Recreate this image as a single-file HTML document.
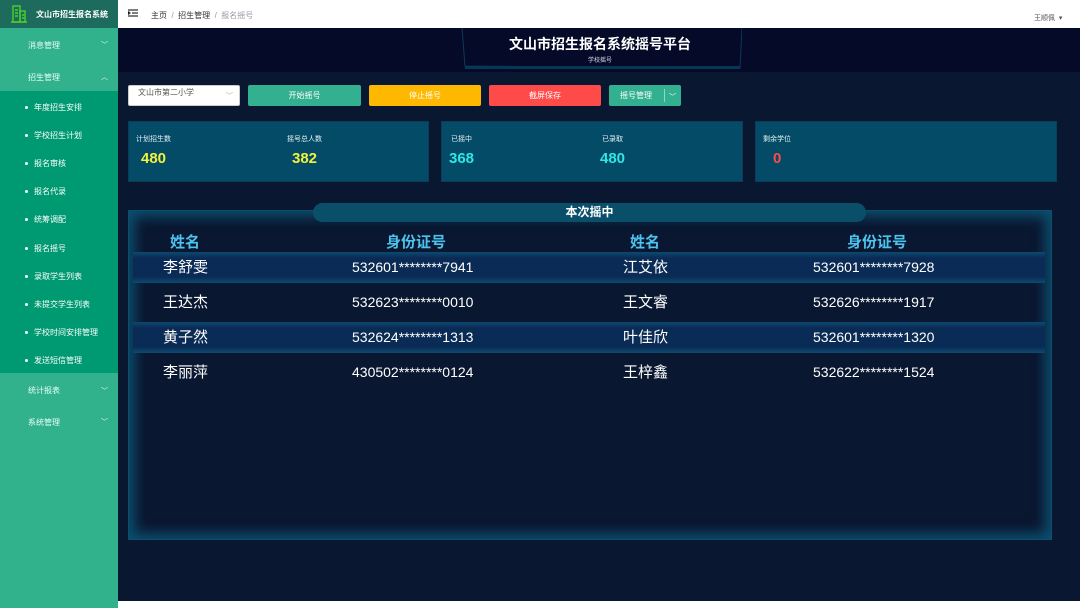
<!DOCTYPE html>
<html><head><meta charset="utf-8"><style>
*{margin:0;padding:0;box-sizing:border-box}
body{width:1080px;height:608px;overflow:hidden;font-family:"Liberation Sans","Noto Sans CJK SC",sans-serif;background:#fff;position:relative}
.abs{position:absolute}
.side{left:0;top:0;width:118px;height:608px;background:#32b18d}
.logo{left:0;top:0;width:118px;height:28px;background:#1d6b5d;color:#fff;font-size:8px;font-weight:bold}
.sub{left:0;top:91px;width:118px;height:282px;background:#009a72}
.mi{color:#e8fff7;font-size:8px;position:absolute;left:28px}
.si{color:#fff;font-size:8px;position:absolute;left:34px}
.si:before{content:"";position:absolute;left:-9px;top:4px;width:3px;height:3px;border-radius:50%;background:#fff}
.chev{position:absolute;left:101px;color:#dff;font-size:7px}
.top{left:118px;top:0;width:962px;height:28px;background:#fff;font-size:8px;color:#333}
.main{left:118px;top:28px;width:962px;height:573px;background:#0a1730}
.band{left:118px;top:28px;width:962px;height:44px;background:#050a28}
.btn{position:absolute;top:85px;height:21px;border-radius:2px;color:#fff;font-size:8px;text-align:center;line-height:21px}
.card{position:absolute;top:121px;height:61px;background:#044b67;border:1px solid #0a3d58}
.lb{position:absolute;top:12px;color:#e6f2f6;font-size:7px}
.num{position:absolute;top:28px;font-size:15px;font-weight:bold}
.row{position:absolute;left:133px;width:912px;color:#fff;font-size:15px;line-height:31px}
.row span{position:absolute;top:0}
.row span.id{font-size:14px}
.hl{background:linear-gradient(#0d4a70,#0a2b55 20%,#0a2b55 80%,#0d4a70)}
</style></head><body>
<div class="abs side"></div>
<div class="abs logo">
<svg class="abs" style="left:11px;top:5px" width="16" height="18" viewBox="0 0 16 18" fill="none" stroke="#4ccf2a" stroke-width="1.4"><rect x="2" y="1" width="7" height="16"/><rect x="9" y="6" width="5" height="11"/><path d="M4 5h3M4 8h3M4 11h3M11 10h2M11 13h2M0 17h16"/></svg>
<span class="abs" style="left:36px;top:9px">文山市招生报名系统</span></div>
<div class="abs sub"></div>
<div class="mi" style="top:40px">消息管理</div><div class="chev" style="top:40px">﹀</div>
<div class="mi" style="top:72px">招生管理</div><div class="chev" style="top:72px">︿</div>
<div class="si" style="top:102px">年度招生安排</div>
<div class="si" style="top:130px">学校招生计划</div>
<div class="si" style="top:158px">报名审核</div>
<div class="si" style="top:186px">报名代录</div>
<div class="si" style="top:214px">统筹调配</div>
<div class="si" style="top:243px">报名摇号</div>
<div class="si" style="top:271px">录取学生列表</div>
<div class="si" style="top:299px">未提交学生列表</div>
<div class="si" style="top:327px">学校时间安排管理</div>
<div class="si" style="top:355px">发送短信管理</div>
<div class="mi" style="top:385px">统计报表</div><div class="chev" style="top:386px">﹀</div>
<div class="mi" style="top:417px">系统管理</div><div class="chev" style="top:417px">﹀</div>
<div class="abs top">
<svg class="abs" style="left:10px;top:9px" width="10" height="8" viewBox="0 0 10 8" stroke="#333" stroke-width="1.2"><path d="M0 1h10M4 4h6M0 7h10M0 2.5l2 1.5-2 1.5"/></svg>
<span class="abs" style="left:33px;top:10px">主页 <span style="color:#999">&nbsp;/&nbsp;</span> 招生管理 <span style="color:#999">&nbsp;/&nbsp;</span> <span style="color:#99a">报名摇号</span></span>
<span class="abs" style="left:916px;top:13px;font-size:7px;color:#555">王顺佩 &nbsp;▾</span></div>
<div class="abs main"></div>
<div class="abs band"></div>
<svg class="abs" style="left:458px;top:28px" width="284" height="44"><path d="M4 0 L7 38 L282 40 L284 0" fill="none" stroke="#0d3a58" stroke-width="1"/><rect x="7" y="38" width="275" height="3" fill="#083656"/></svg>
<div class="abs" style="left:458px;top:34px;width:284px;text-align:center;color:#fff;font-size:14px;font-weight:bold">文山市招生报名系统摇号平台</div>
<div class="abs" style="left:458px;top:55px;width:284px;text-align:center;color:#dde;font-size:6px">学校摇号</div>
<div class="btn" style="left:128px;width:112px;background:#fff;color:#555;text-align:left;padding-left:9px;line-height:13px;border:1px solid #ccc">文山市第二小学<span style="position:absolute;right:6px;top:4px;color:#aaa;font-size:7px">﹀</span></div>
<div class="btn" style="left:248px;width:113px;background:#33b08f">开始摇号</div>
<div class="btn" style="left:369px;width:112px;background:#ffb800">停止摇号</div>
<div class="btn" style="left:489px;width:112px;background:#ff4a4a">截屏保存</div>
<div class="btn" style="left:609px;width:72px;background:#33b08f;text-align:left;padding-left:11px">摇号管理<span style="position:absolute;left:55px;top:4px;height:13px;border-left:1px solid #8fd9c3"></span><span style="position:absolute;left:60px;top:2px;font-size:7px">﹀</span></div>
<div class="card" style="left:128px;width:301px"><span class="lb" style="left:7px">计划招生数</span><span class="num" style="left:12px;color:#f2f23a">480</span><span class="lb" style="left:158px">摇号总人数</span><span class="num" style="left:163px;color:#f2f23a">382</span></div>
<div class="card" style="left:441px;width:302px"><span class="lb" style="left:9px">已摇中</span><span class="num" style="left:7px;color:#2ee6e6">368</span><span class="lb" style="left:160px">已录取</span><span class="num" style="left:158px;color:#2ee6e6">480</span></div>
<div class="card" style="left:755px;width:302px"><span class="lb" style="left:7px">剩余学位</span><span class="num" style="left:17px;color:#ff4a4a">0</span></div>
<div class="abs" style="left:128px;top:210px;width:924px;height:330px;background:#0a1730;box-shadow:inset 0 0 12px 6px #0b4e6e;border:1px solid #0b4e6e"></div>
<div class="abs" style="left:313px;top:203px;width:553px;height:19px;border-radius:10px;background:#0a4f6a;color:#fff;font-size:12px;font-weight:bold;text-align:center;line-height:19px">本次摇中</div>
<div class="row" style="top:227px;height:28px;color:#4cc3ee;font-weight:bold"><span style="left:37px">姓名</span><span style="left:253px">身份证号</span><span style="left:497px">姓名</span><span style="left:714px">身份证号</span></div>
<div class="row hl" style="top:252px;height:31px"><span style="left:30px">李舒雯</span><span class="id" style="left:219px">532601********7941</span><span style="left:490px">江艾依</span><span class="id" style="left:680px">532601********7928</span></div>
<div class="row" style="top:287px;height:31px"><span style="left:30px">王达杰</span><span class="id" style="left:219px">532623********0010</span><span style="left:490px">王文睿</span><span class="id" style="left:680px">532626********1917</span></div>
<div class="row hl" style="top:322px;height:31px"><span style="left:30px">黄子然</span><span class="id" style="left:219px">532624********1313</span><span style="left:490px">叶佳欣</span><span class="id" style="left:680px">532601********1320</span></div>
<div class="row" style="top:357px;height:31px"><span style="left:30px">李丽萍</span><span class="id" style="left:219px">430502********0124</span><span style="left:490px">王梓鑫</span><span class="id" style="left:680px">532622********1524</span></div>
</body></html>
